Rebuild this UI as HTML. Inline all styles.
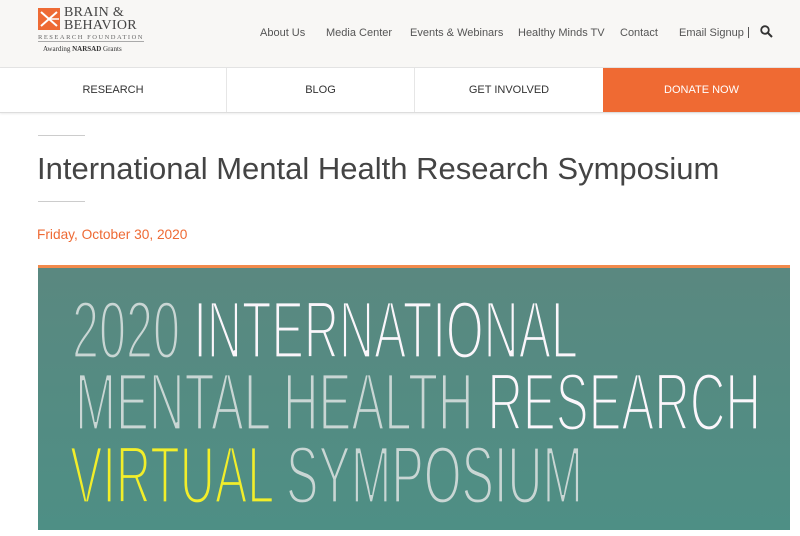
<!DOCTYPE html>
<html><head><style>
body{margin:0;width:800px;height:536px;overflow:hidden;background:#fff;font-family:"Liberation Sans",sans-serif;position:relative}
.hdr{position:absolute;left:0;top:0;width:800px;height:67px;background:#f8f7f5;border-bottom:1px solid #e4e4e4}
.top a{position:absolute;top:27px;font-size:11px;color:#555;text-decoration:none}
.nav{position:absolute;top:68px;left:0;width:800px;height:44px;border-bottom:1px solid #ddd;box-shadow:0 1px 2px rgba(0,0,0,.08)}
.nav div{position:absolute;top:0;height:44px;line-height:45px;text-align:center;font-size:11px;color:#333;border-right:1px solid #e6e6e6}
</style></head><body>
<div class="hdr">
<svg style="position:absolute;left:38px;top:8px" width="22" height="22" viewBox="0 0 22 22"><rect width="22" height="22" fill="#ee6a34"/><path d="M3 4 L19 18 M3 18 L19 4" stroke="#fff" stroke-width="2"/><path d="M11 11 L21 11" stroke="#fff" stroke-width="1.5"/></svg>
<div style="position:absolute;left:64px;top:6px;font-family:'Liberation Serif',serif;font-size:14px;line-height:13px;color:#444;letter-spacing:.3px">BRAIN &amp;<br>BEHAVIOR</div>
<div style="position:absolute;left:38px;top:34px;font-family:'Liberation Serif',serif;font-size:6.5px;color:#666;letter-spacing:1.5px;border-bottom:1px solid #aaa;width:106px">RESEARCH FOUNDATION</div>
<div style="position:absolute;left:43px;top:45px;font-family:'Liberation Serif',serif;font-size:7px;color:#333">Awarding <b>NARSAD</b> Grants</div>
<div class="top">
<a style="left:260px">About Us</a><a style="left:326px">Media Center</a><a style="left:410px">Events &amp; Webinars</a><a style="left:518px">Healthy Minds TV</a><a style="left:620px">Contact</a><a style="left:679px">Email Signup</a>
</div>
<div style="position:absolute;left:748px;top:27px;width:1px;height:11px;background:#555"></div>
<svg style="position:absolute;left:760px;top:25px" width="13" height="13" viewBox="0 0 13 13"><circle cx="5" cy="5" r="3.8" fill="none" stroke="#333" stroke-width="1.8"/><path d="M8 8 L12 12" stroke="#333" stroke-width="2"/></svg>
</div>
<div class="nav">
<div style="left:0;width:226px">RESEARCH</div>
<div style="left:227px;width:187px">BLOG</div>
<div style="left:415px;width:188px">GET INVOLVED</div>
<div style="left:603px;width:197px;background:#ef6a33;color:#fff;border:none">DONATE NOW</div>
</div>
<div style="position:absolute;left:38px;top:135px;width:47px;height:1px;background:#ccc"></div>
<div style="position:absolute;left:37px;top:151px;font-size:31px;color:#444">International Mental Health Research Symposium</div>
<div style="position:absolute;left:38px;top:201px;width:47px;height:1px;background:#ccc"></div>
<div style="position:absolute;left:37px;top:227px;font-size:13.7px;color:#ee6a34">Friday, October 30, 2020</div>
<div style="position:absolute;left:38px;top:265px;width:752px;height:3px;background:#f28a4c"></div>
<svg style="position:absolute;left:38px;top:268px" width="752" height="262" viewBox="0 0 752 262">
<defs><linearGradient id="g" gradientUnits="userSpaceOnUse" x1="0" y1="0" x2="0" y2="262"><stop offset="0" stop-color="#5a8880"/><stop offset="1" stop-color="#4e8f85"/></linearGradient></defs>
<rect width="752" height="262" fill="url(#g)"/>
<g font-family="'Liberation Sans Narrow','Liberation Sans',sans-serif" font-size="82" stroke="url(#g)" stroke-width="3.2">
<text x="34" y="90" textLength="506" lengthAdjust="spacingAndGlyphs"><tspan fill="#c9d6d4">2020 </tspan><tspan fill="#fbf6fb">INTERNATIONAL</tspan></text>
<text x="37" y="162" textLength="686" lengthAdjust="spacingAndGlyphs"><tspan fill="#c9d6d4">MENTAL HEALTH </tspan><tspan fill="#fbf6fb">RESEARCH</tspan></text>
<text x="32" y="235" textLength="513" lengthAdjust="spacingAndGlyphs"><tspan fill="#f2ee2a">VIRTUAL </tspan><tspan fill="#c9d6d4">SYMPOSIUM</tspan></text>
</g>
</svg>
</body></html>
